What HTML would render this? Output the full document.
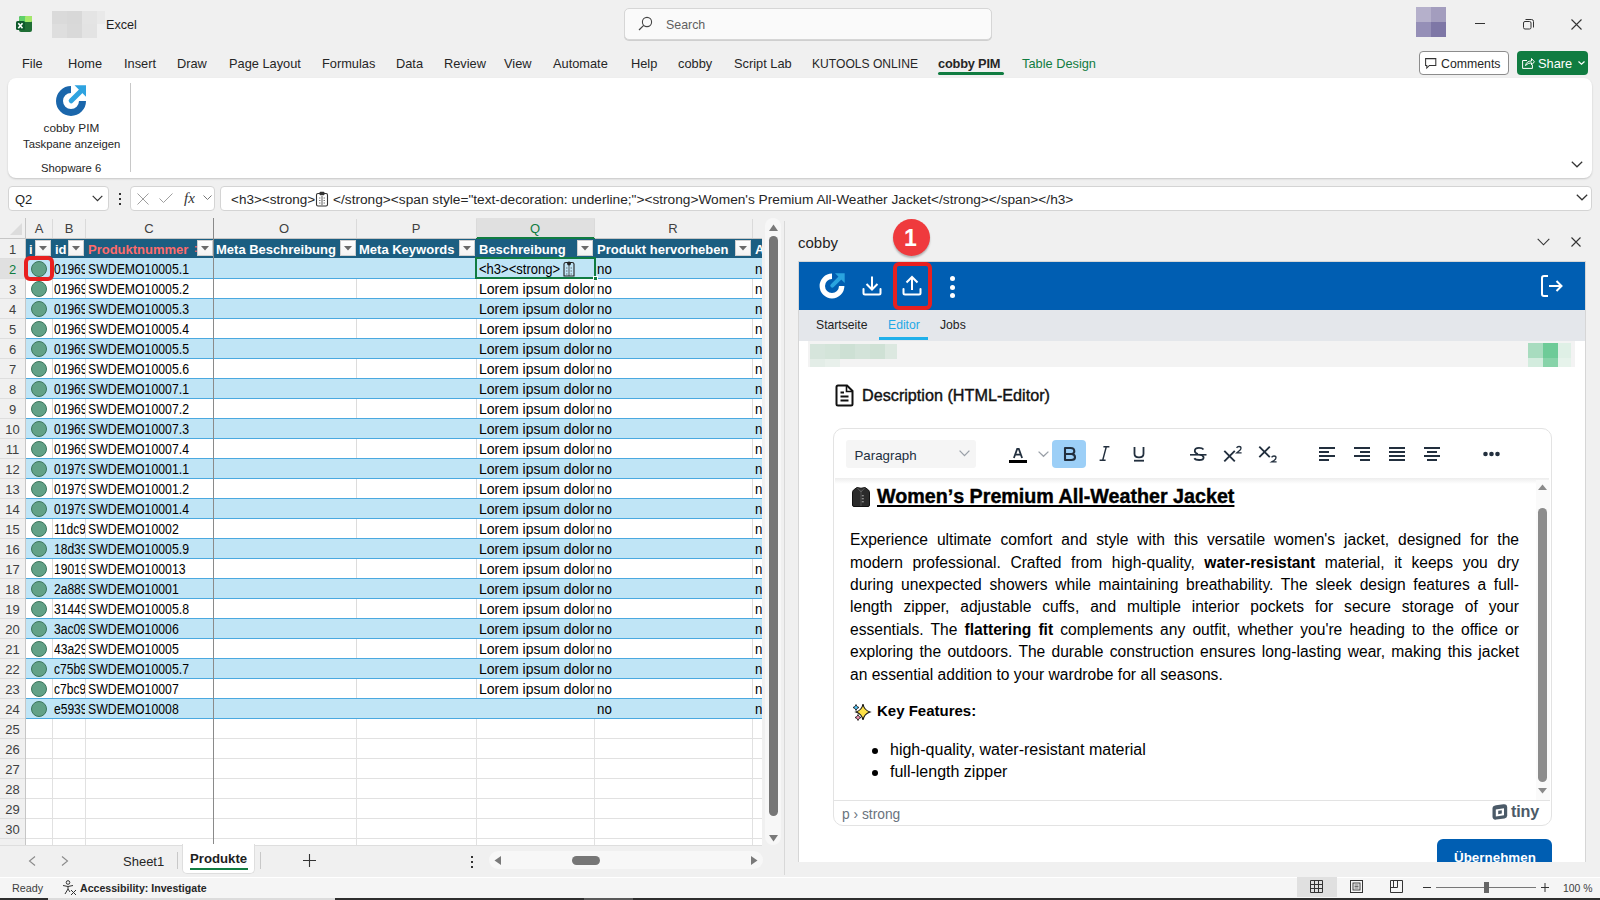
<!DOCTYPE html><html><head><meta charset="utf-8"><title>Excel</title><style>
*{box-sizing:border-box}
html,body{margin:0;padding:0}
body{width:1600px;height:900px;overflow:hidden;position:relative;background:#f0f0f0;font-family:"Liberation Sans",sans-serif}
.a{position:absolute}
.t{position:absolute;white-space:nowrap}
svg{overflow:visible}
</style></head><body>
<svg class="a" style="left:16px;top:16px;" width="16" height="16" viewBox="0 0 16 16">
<rect x="3" y="0" width="13" height="16" rx="2" fill="#1f6e35"/>
<rect x="3" y="0" width="13" height="6" rx="2" fill="#5fd06a"/>
<rect x="9" y="0" width="7" height="6" rx="1" fill="#a4e86a"/>
<rect x="0" y="5" width="9" height="9" rx="1.5" fill="#0e5a2c"/>
<path d="M2.3 7.2 L6.5 12.2 M6.5 7.2 L2.3 12.2" stroke="#fff" stroke-width="1.6"/>
</svg>
<div class="a" style="left:52px;top:11px;width:15px;height:13px;background:#dadada"></div>
<div class="a" style="left:67px;top:11px;width:15px;height:13px;background:#d8d8d8"></div>
<div class="a" style="left:82px;top:11px;width:15px;height:13px;background:#e4e4e4"></div>
<div class="a" style="left:97px;top:11px;width:8px;height:13px;background:#e9e9e9"></div>
<div class="a" style="left:52px;top:24px;width:15px;height:14px;background:#dedede"></div>
<div class="a" style="left:67px;top:24px;width:15px;height:14px;background:#d9d9d9"></div>
<div class="a" style="left:82px;top:24px;width:15px;height:14px;background:#e3e3e3"></div>
<div class="t " style="left:106px;top:19.00px;font-size:12.6px;line-height:12.6px;font-weight:400;color:#1f1f1f;">Excel</div>
<div class="a" style="left:624px;top:8px;width:368px;height:32px;background:#fafafa;border:1px solid #d6d6d6;border-radius:5px;box-shadow:0 1px 0 #cfcfcf"></div>
<svg class="a" style="left:637px;top:16px;" width="16" height="16" viewBox="0 0 16 16"><circle cx="10" cy="6" r="4.6" fill="none" stroke="#444" stroke-width="1.1"/><path d="M6.7 9.3 L2 14" stroke="#444" stroke-width="1.2"/></svg>
<div class="t " style="left:666px;top:19.00px;font-size:12.4px;line-height:12.4px;font-weight:400;color:#5f5f5f;">Search</div>
<div class="a" style="left:1416px;top:7px;width:15px;height:15px;background:#b5b0cb"></div>
<div class="a" style="left:1431px;top:7px;width:15px;height:15px;background:#a39dbe"></div>
<div class="a" style="left:1416px;top:22px;width:15px;height:15px;background:#958fb7"></div>
<div class="a" style="left:1431px;top:22px;width:15px;height:15px;background:#7e77a6"></div>
<div class="a" style="left:1475px;top:23px;width:10px;height:1px;background:#333"></div>
<svg class="a" style="left:1523px;top:19px;" width="11" height="11" viewBox="0 0 11 11"><rect x="0.5" y="2.5" width="7.5" height="7.5" rx="1.5" fill="none" stroke="#333" stroke-width="1"/><path d="M2.5 0.5 H8.5 Q10.5 0.5 10.5 2.5 V8.5" fill="none" stroke="#333" stroke-width="1"/></svg>
<svg class="a" style="left:1571px;top:19px;" width="11" height="11" viewBox="0 0 11 11"><path d="M0.5 0.5 L10.5 10.5 M10.5 0.5 L0.5 10.5" stroke="#333" stroke-width="1.1"/></svg>
<div class="t " style="left:22px;top:58.00px;font-size:12.8px;line-height:12.8px;font-weight:400;color:#262626;">File</div>
<div class="t " style="left:68px;top:58.00px;font-size:12.8px;line-height:12.8px;font-weight:400;color:#262626;">Home</div>
<div class="t " style="left:124px;top:58.00px;font-size:12.8px;line-height:12.8px;font-weight:400;color:#262626;">Insert</div>
<div class="t " style="left:177px;top:58.00px;font-size:12.8px;line-height:12.8px;font-weight:400;color:#262626;">Draw</div>
<div class="t " style="left:229px;top:58.00px;font-size:12.8px;line-height:12.8px;font-weight:400;color:#262626;">Page Layout</div>
<div class="t " style="left:322px;top:58.00px;font-size:12.8px;line-height:12.8px;font-weight:400;color:#262626;">Formulas</div>
<div class="t " style="left:396px;top:58.00px;font-size:12.8px;line-height:12.8px;font-weight:400;color:#262626;">Data</div>
<div class="t " style="left:444px;top:58.00px;font-size:12.8px;line-height:12.8px;font-weight:400;color:#262626;">Review</div>
<div class="t " style="left:504px;top:58.00px;font-size:12.8px;line-height:12.8px;font-weight:400;color:#262626;">View</div>
<div class="t " style="left:553px;top:58.00px;font-size:12.8px;line-height:12.8px;font-weight:400;color:#262626;">Automate</div>
<div class="t " style="left:631px;top:58.00px;font-size:12.8px;line-height:12.8px;font-weight:400;color:#262626;">Help</div>
<div class="t " style="left:678px;top:58.00px;font-size:12.8px;line-height:12.8px;font-weight:400;color:#262626;">cobby</div>
<div class="t " style="left:734px;top:58.00px;font-size:12.8px;line-height:12.8px;font-weight:400;color:#262626;">Script Lab</div>
<div class="t " style="left:812px;top:58.00px;font-size:12.1px;line-height:12.1px;font-weight:400;color:#262626;">KUTOOLS ONLINE</div>
<div class="t " style="left:938px;top:58.00px;font-size:12.8px;line-height:12.8px;font-weight:700;color:#262626;letter-spacing:-0.2px">cobby PIM</div>
<div class="a" style="left:938px;top:72px;width:66px;height:3px;background:#107c41;border-radius:2px"></div>
<div class="t " style="left:1022px;top:58.00px;font-size:12.8px;line-height:12.8px;font-weight:400;color:#107c41;">Table Design</div>
<div class="a" style="left:1419px;top:51px;width:90px;height:24px;background:#fff;border:1px solid #8c8c8c;border-radius:4px"></div>
<svg class="a" style="left:1425px;top:58px;" width="12" height="11" viewBox="0 0 12 11"><path d="M0.6 0.6 H10.8 V7.4 H4.4 L1.8 10 V7.4 H0.6 Z" fill="none" stroke="#333" stroke-width="1.05"/></svg>
<div class="t " style="left:1441px;top:58.00px;font-size:12.3px;line-height:12.3px;font-weight:400;color:#262626;">Comments</div>
<div class="a" style="left:1517px;top:51px;width:71px;height:24px;background:#107c41;border-radius:4px"></div>
<svg class="a" style="left:1522px;top:57px;" width="13" height="12" viewBox="0 0 13 12"><path d="M5 3.5 H0.6 V11.4 H10.4 V8" fill="none" stroke="#fff" stroke-width="1"/><path d="M3.5 8.5 Q4.5 4 9.5 4 V1.5 L12.4 4.8 L9.5 8 V5.8 Q6 5.8 3.5 8.5 Z" fill="none" stroke="#fff" stroke-width="1"/></svg>
<div class="t " style="left:1538px;top:58.00px;font-size:12.8px;line-height:12.8px;font-weight:400;color:#fff;">Share</div>
<svg class="a" style="left:1578px;top:61px;" width="7" height="4" viewBox="0 0 7 4"><path d="M0.5 0.5 L3.5 3.3 L6.5 0.5" fill="none" stroke="#fff" stroke-width="1.2"/></svg>
<div class="a" style="left:8px;top:78px;width:1584px;height:100px;background:#fff;border-radius:8px;box-shadow:0 1px 2px rgba(0,0,0,0.18)"></div>
<svg class="a" style="left:56px;top:85px;" width="30" height="31" viewBox="0 0 30 31">
<path d="M15 4.5 A11.5 11.5 0 1 0 26.5 16" fill="none" stroke="#1a66ab" stroke-width="7"/>
<path d="M15.2 15.8 L25 6" stroke="#2ea3e0" stroke-width="5" stroke-linecap="round"/>
<path d="M18.5 0.3 H30 V11.8 Z" fill="#2ea3e0"/>
</svg>
<div class="t " style="left:43.5px;top:123.00px;font-size:11.8px;line-height:11.8px;font-weight:400;color:#262626;">cobby PIM</div>
<div class="t " style="left:23px;top:139.00px;font-size:11.3px;line-height:11.3px;font-weight:400;color:#262626;">Taskpane anzeigen</div>
<div class="t " style="left:41px;top:163.00px;font-size:11.3px;line-height:11.3px;font-weight:400;color:#262626;">Shopware 6</div>
<div class="a" style="left:130px;top:83px;width:1px;height:89px;background:#c8c8c8"></div>
<svg class="a" style="left:1571px;top:161px;" width="12" height="7" viewBox="0 0 12 7"><path d="M0.8 0.8 L6 5.8 L11.2 0.8" fill="none" stroke="#333" stroke-width="1.2"/></svg>
<div class="a" style="left:8px;top:186px;width:101px;height:25px;background:#fff;border:1px solid #d4d4d4;border-radius:4px"></div>
<div class="t " style="left:15px;top:193.00px;font-size:13px;line-height:13px;font-weight:400;color:#1f1f1f;">Q2</div>
<svg class="a" style="left:92px;top:195px;" width="11" height="7" viewBox="0 0 11 7"><path d="M0.7 0.8 L5.5 5.6 L10.3 0.8" fill="none" stroke="#333" stroke-width="1.2"/></svg>
<div class="a" style="left:119px;top:193px;width:2px;height:2px;background:#333"></div>
<div class="a" style="left:119px;top:198px;width:2px;height:2px;background:#333"></div>
<div class="a" style="left:119px;top:203px;width:2px;height:2px;background:#333"></div>
<div class="a" style="left:130px;top:186px;width:85px;height:25px;background:#fff;border:1px solid #d4d4d4;border-radius:4px"></div>
<svg class="a" style="left:137px;top:193px;" width="12" height="12" viewBox="0 0 12 12"><path d="M0.5 0.5 L11.5 11.5 M11.5 0.5 L0.5 11.5" stroke="#9e9e9e" stroke-width="1"/></svg>
<svg class="a" style="left:159px;top:193px;" width="14" height="10" viewBox="0 0 14 10"><path d="M0.5 5.5 L4.5 9.5 L13.5 0.5" fill="none" stroke="#9e9e9e" stroke-width="1"/></svg>
<div class="t " style="left:184px;top:191.00px;font-size:15px;line-height:15px;font-weight:400;color:#333;font-family:'Liberation Serif',serif;font-style:italic">fx</div>
<svg class="a" style="left:203px;top:195px;" width="9" height="6" viewBox="0 0 9 6"><path d="M0.5 0.5 L4.5 4.5 L8.5 0.5" fill="none" stroke="#777" stroke-width="1"/></svg>
<div class="a" style="left:220px;top:186px;width:1372px;height:25px;background:#fff;border:1px solid #d4d4d4;border-radius:4px"></div>
<div class="t " style="left:231px;top:193.00px;font-size:13.5px;line-height:13.5px;font-weight:400;color:#262626;">&lt;h3&gt;&lt;strong&gt;</div>
<svg class="a" style="left:315px;top:191px;" width="14" height="16" viewBox="0 0 14 16"><rect x="1.5" y="2.5" width="11" height="12.5" rx="1.5" fill="none" stroke="#333" stroke-width="1.1"/><rect x="4.5" y="0.8" width="5" height="3.5" rx="1" fill="#333"/><path d="M7 5 V14" stroke="#333" stroke-width="0.8"/><path d="M4 7 H5.5 M4 9.5 H5.5 M4 12 H5.5 M8.5 7 H10 M8.5 9.5 H10 M8.5 12 H10" stroke="#555" stroke-width="0.8"/></svg>
<div class="t " style="left:333px;top:193.00px;font-size:13.7px;line-height:13.7px;font-weight:400;color:#262626;">&lt;/strong&gt;&lt;span style=&quot;text-decoration: underline;&quot;&gt;&lt;strong&gt;Women&#x27;s Premium All-Weather Jacket&lt;/strong&gt;&lt;/span&gt;&lt;/h3&gt;</div>
<svg class="a" style="left:1576px;top:194px;" width="12" height="7" viewBox="0 0 12 7"><path d="M0.8 0.8 L6 5.8 L11.2 0.8" fill="none" stroke="#333" stroke-width="1.2"/></svg>
<div class="a" style="left:0;top:218px;width:762px;height:627px;overflow:hidden;background:#fff">
<div class="a" style="left:0px;top:0px;width:762px;height:20px;background:#f0f0f0"></div>
<div class="a" style="left:0px;top:20px;width:762px;height:1px;background:#c6c6c6"></div>
<div class="a" style="left:476px;top:0px;width:119px;height:20px;background:#e0e0e0"></div>
<div class="a" style="left:476px;top:19px;width:119px;height:2px;background:#107c41"></div>
<div class="a" style="left:52px;top:1px;width:1px;height:19px;background:#dadada"></div>
<div class="a" style="left:85px;top:1px;width:1px;height:19px;background:#dadada"></div>
<div class="a" style="left:356px;top:1px;width:1px;height:19px;background:#dadada"></div>
<div class="a" style="left:476px;top:1px;width:1px;height:19px;background:#dadada"></div>
<div class="a" style="left:594px;top:1px;width:1px;height:19px;background:#dadada"></div>
<div class="a" style="left:752px;top:1px;width:1px;height:19px;background:#dadada"></div>
<div class="a" style="left:25px;top:0px;width:1px;height:627px;background:#c6c6c6"></div>
<svg class="a" style="left:10px;top:5px" width="12" height="12" viewBox="0 0 12 12"><path d="M12 0 V12 H0 Z" fill="#dcdcdc"/></svg>
<div class="t" style="left:19px;top:4px;width:40px;text-align:center;font-size:13px;line-height:13px;color:#404040">A</div>
<div class="t" style="left:49px;top:4px;width:40px;text-align:center;font-size:13px;line-height:13px;color:#404040">B</div>
<div class="t" style="left:129px;top:4px;width:40px;text-align:center;font-size:13px;line-height:13px;color:#404040">C</div>
<div class="t" style="left:264px;top:4px;width:40px;text-align:center;font-size:13px;line-height:13px;color:#404040">O</div>
<div class="t" style="left:396px;top:4px;width:40px;text-align:center;font-size:13px;line-height:13px;color:#404040">P</div>
<div class="t" style="left:515px;top:4px;width:40px;text-align:center;font-size:13px;line-height:13px;color:#107c41">Q</div>
<div class="t" style="left:653px;top:4px;width:40px;text-align:center;font-size:13px;line-height:13px;color:#404040">R</div>
<div class="a" style="left:0px;top:21px;width:25px;height:606px;background:#f0f0f0"></div>
<div class="a" style="left:0px;top:41px;width:25px;height:19px;background:#e0e0e0"></div>
<div class="t" style="left:0px;top:24.50px;width:25px;text-align:center;font-size:13px;line-height:13px;color:#404040">1</div>
<div class="a" style="left:0px;top:40px;width:25px;height:1px;background:#dedede"></div>
<div class="t" style="left:0px;top:44.50px;width:25px;text-align:center;font-size:13px;line-height:13px;color:#107c41">2</div>
<div class="a" style="left:0px;top:60px;width:25px;height:1px;background:#dedede"></div>
<div class="t" style="left:0px;top:64.50px;width:25px;text-align:center;font-size:13px;line-height:13px;color:#404040">3</div>
<div class="a" style="left:0px;top:80px;width:25px;height:1px;background:#dedede"></div>
<div class="t" style="left:0px;top:84.50px;width:25px;text-align:center;font-size:13px;line-height:13px;color:#404040">4</div>
<div class="a" style="left:0px;top:100px;width:25px;height:1px;background:#dedede"></div>
<div class="t" style="left:0px;top:104.50px;width:25px;text-align:center;font-size:13px;line-height:13px;color:#404040">5</div>
<div class="a" style="left:0px;top:120px;width:25px;height:1px;background:#dedede"></div>
<div class="t" style="left:0px;top:124.50px;width:25px;text-align:center;font-size:13px;line-height:13px;color:#404040">6</div>
<div class="a" style="left:0px;top:140px;width:25px;height:1px;background:#dedede"></div>
<div class="t" style="left:0px;top:144.50px;width:25px;text-align:center;font-size:13px;line-height:13px;color:#404040">7</div>
<div class="a" style="left:0px;top:160px;width:25px;height:1px;background:#dedede"></div>
<div class="t" style="left:0px;top:164.50px;width:25px;text-align:center;font-size:13px;line-height:13px;color:#404040">8</div>
<div class="a" style="left:0px;top:180px;width:25px;height:1px;background:#dedede"></div>
<div class="t" style="left:0px;top:184.50px;width:25px;text-align:center;font-size:13px;line-height:13px;color:#404040">9</div>
<div class="a" style="left:0px;top:200px;width:25px;height:1px;background:#dedede"></div>
<div class="t" style="left:0px;top:204.50px;width:25px;text-align:center;font-size:13px;line-height:13px;color:#404040">10</div>
<div class="a" style="left:0px;top:220px;width:25px;height:1px;background:#dedede"></div>
<div class="t" style="left:0px;top:224.50px;width:25px;text-align:center;font-size:13px;line-height:13px;color:#404040">11</div>
<div class="a" style="left:0px;top:240px;width:25px;height:1px;background:#dedede"></div>
<div class="t" style="left:0px;top:244.50px;width:25px;text-align:center;font-size:13px;line-height:13px;color:#404040">12</div>
<div class="a" style="left:0px;top:260px;width:25px;height:1px;background:#dedede"></div>
<div class="t" style="left:0px;top:264.50px;width:25px;text-align:center;font-size:13px;line-height:13px;color:#404040">13</div>
<div class="a" style="left:0px;top:280px;width:25px;height:1px;background:#dedede"></div>
<div class="t" style="left:0px;top:284.50px;width:25px;text-align:center;font-size:13px;line-height:13px;color:#404040">14</div>
<div class="a" style="left:0px;top:300px;width:25px;height:1px;background:#dedede"></div>
<div class="t" style="left:0px;top:304.50px;width:25px;text-align:center;font-size:13px;line-height:13px;color:#404040">15</div>
<div class="a" style="left:0px;top:320px;width:25px;height:1px;background:#dedede"></div>
<div class="t" style="left:0px;top:324.50px;width:25px;text-align:center;font-size:13px;line-height:13px;color:#404040">16</div>
<div class="a" style="left:0px;top:340px;width:25px;height:1px;background:#dedede"></div>
<div class="t" style="left:0px;top:344.50px;width:25px;text-align:center;font-size:13px;line-height:13px;color:#404040">17</div>
<div class="a" style="left:0px;top:360px;width:25px;height:1px;background:#dedede"></div>
<div class="t" style="left:0px;top:364.50px;width:25px;text-align:center;font-size:13px;line-height:13px;color:#404040">18</div>
<div class="a" style="left:0px;top:380px;width:25px;height:1px;background:#dedede"></div>
<div class="t" style="left:0px;top:384.50px;width:25px;text-align:center;font-size:13px;line-height:13px;color:#404040">19</div>
<div class="a" style="left:0px;top:400px;width:25px;height:1px;background:#dedede"></div>
<div class="t" style="left:0px;top:404.50px;width:25px;text-align:center;font-size:13px;line-height:13px;color:#404040">20</div>
<div class="a" style="left:0px;top:420px;width:25px;height:1px;background:#dedede"></div>
<div class="t" style="left:0px;top:424.50px;width:25px;text-align:center;font-size:13px;line-height:13px;color:#404040">21</div>
<div class="a" style="left:0px;top:440px;width:25px;height:1px;background:#dedede"></div>
<div class="t" style="left:0px;top:444.50px;width:25px;text-align:center;font-size:13px;line-height:13px;color:#404040">22</div>
<div class="a" style="left:0px;top:460px;width:25px;height:1px;background:#dedede"></div>
<div class="t" style="left:0px;top:464.50px;width:25px;text-align:center;font-size:13px;line-height:13px;color:#404040">23</div>
<div class="a" style="left:0px;top:480px;width:25px;height:1px;background:#dedede"></div>
<div class="t" style="left:0px;top:484.50px;width:25px;text-align:center;font-size:13px;line-height:13px;color:#404040">24</div>
<div class="a" style="left:0px;top:500px;width:25px;height:1px;background:#dedede"></div>
<div class="t" style="left:0px;top:504.50px;width:25px;text-align:center;font-size:13px;line-height:13px;color:#404040">25</div>
<div class="a" style="left:0px;top:520px;width:25px;height:1px;background:#dedede"></div>
<div class="t" style="left:0px;top:524.50px;width:25px;text-align:center;font-size:13px;line-height:13px;color:#404040">26</div>
<div class="a" style="left:0px;top:540px;width:25px;height:1px;background:#dedede"></div>
<div class="t" style="left:0px;top:544.50px;width:25px;text-align:center;font-size:13px;line-height:13px;color:#404040">27</div>
<div class="a" style="left:0px;top:560px;width:25px;height:1px;background:#dedede"></div>
<div class="t" style="left:0px;top:564.50px;width:25px;text-align:center;font-size:13px;line-height:13px;color:#404040">28</div>
<div class="a" style="left:0px;top:580px;width:25px;height:1px;background:#dedede"></div>
<div class="t" style="left:0px;top:584.50px;width:25px;text-align:center;font-size:13px;line-height:13px;color:#404040">29</div>
<div class="a" style="left:0px;top:600px;width:25px;height:1px;background:#dedede"></div>
<div class="t" style="left:0px;top:604.50px;width:25px;text-align:center;font-size:13px;line-height:13px;color:#404040">30</div>
<div class="a" style="left:0px;top:620px;width:25px;height:1px;background:#dedede"></div>
<div class="t" style="left:0px;top:624.50px;width:25px;text-align:center;font-size:13px;line-height:13px;color:#404040">31</div>
<div class="a" style="left:26px;top:500px;width:736px;height:1px;background:#e1e1e1"></div>
<div class="a" style="left:26px;top:520px;width:736px;height:1px;background:#e1e1e1"></div>
<div class="a" style="left:26px;top:540px;width:736px;height:1px;background:#e1e1e1"></div>
<div class="a" style="left:26px;top:560px;width:736px;height:1px;background:#e1e1e1"></div>
<div class="a" style="left:26px;top:580px;width:736px;height:1px;background:#e1e1e1"></div>
<div class="a" style="left:26px;top:600px;width:736px;height:1px;background:#e1e1e1"></div>
<div class="a" style="left:26px;top:620px;width:736px;height:1px;background:#e1e1e1"></div>
<div class="a" style="left:26px;top:640px;width:736px;height:1px;background:#e1e1e1"></div>
<div class="a" style="left:52px;top:501px;width:1px;height:126px;background:#e1e1e1"></div>
<div class="a" style="left:85px;top:501px;width:1px;height:126px;background:#e1e1e1"></div>
<div class="a" style="left:356px;top:501px;width:1px;height:126px;background:#e1e1e1"></div>
<div class="a" style="left:476px;top:501px;width:1px;height:126px;background:#e1e1e1"></div>
<div class="a" style="left:594px;top:501px;width:1px;height:126px;background:#e1e1e1"></div>
<div class="a" style="left:752px;top:501px;width:1px;height:126px;background:#e1e1e1"></div>
<div class="a" style="left:26px;top:21px;width:736px;height:19px;background:#1b5e81"></div>
<div class="a" style="left:26px;top:40px;width:736px;height:1px;background:#c0e5f6"></div>
<div class="t" style="left:29px;top:25.00px;font-size:13px;line-height:13px;font-weight:700;color:#fff;">i</div>
<div class="a" style="left:35px;top:22px;width:16px;height:16px;background:linear-gradient(#fff,#f3f3f3);border:1px solid #d0d0d0"></div>
<svg class="a" style="left:39px;top:28px" width="8" height="5" viewBox="0 0 8 5"><path d="M0 0 H8 L4 4.5 Z" fill="#6a6a6a"/></svg>
<div class="t" style="left:55px;top:25.00px;font-size:13px;line-height:13px;font-weight:700;color:#fff;">id</div>
<div class="a" style="left:68px;top:22px;width:16px;height:16px;background:linear-gradient(#fff,#f3f3f3);border:1px solid #d0d0d0"></div>
<svg class="a" style="left:72px;top:28px" width="8" height="5" viewBox="0 0 8 5"><path d="M0 0 H8 L4 4.5 Z" fill="#6a6a6a"/></svg>
<div class="t" style="left:88px;top:25.00px;font-size:13px;line-height:13px;font-weight:700;color:#ff6b6b;">Produktnummer</div>
<div class="a" style="left:197px;top:22px;width:16px;height:16px;background:linear-gradient(#fff,#f3f3f3);border:1px solid #d0d0d0"></div>
<svg class="a" style="left:201px;top:28px" width="8" height="5" viewBox="0 0 8 5"><path d="M0 0 H8 L4 4.5 Z" fill="#6a6a6a"/></svg>
<div class="t" style="left:216px;top:25.00px;font-size:13px;line-height:13px;font-weight:700;color:#fff;">Meta Beschreibung</div>
<div class="a" style="left:340px;top:22px;width:16px;height:16px;background:linear-gradient(#fff,#f3f3f3);border:1px solid #d0d0d0"></div>
<svg class="a" style="left:344px;top:28px" width="8" height="5" viewBox="0 0 8 5"><path d="M0 0 H8 L4 4.5 Z" fill="#6a6a6a"/></svg>
<div class="t" style="left:359px;top:25.00px;font-size:13px;line-height:13px;font-weight:700;color:#fff;">Meta Keywords</div>
<div class="a" style="left:459px;top:22px;width:16px;height:16px;background:linear-gradient(#fff,#f3f3f3);border:1px solid #d0d0d0"></div>
<svg class="a" style="left:463px;top:28px" width="8" height="5" viewBox="0 0 8 5"><path d="M0 0 H8 L4 4.5 Z" fill="#6a6a6a"/></svg>
<div class="t" style="left:479px;top:25.00px;font-size:13px;line-height:13px;font-weight:700;color:#fff;">Beschreibung</div>
<div class="a" style="left:577px;top:22px;width:16px;height:16px;background:linear-gradient(#fff,#f3f3f3);border:1px solid #d0d0d0"></div>
<svg class="a" style="left:581px;top:28px" width="8" height="5" viewBox="0 0 8 5"><path d="M0 0 H8 L4 4.5 Z" fill="#6a6a6a"/></svg>
<div class="t" style="left:597px;top:25.00px;font-size:13px;line-height:13px;font-weight:700;color:#fff;">Produkt hervorheben</div>
<div class="a" style="left:735px;top:22px;width:16px;height:16px;background:linear-gradient(#fff,#f3f3f3);border:1px solid #d0d0d0"></div>
<svg class="a" style="left:739px;top:28px" width="8" height="5" viewBox="0 0 8 5"><path d="M0 0 H8 L4 4.5 Z" fill="#6a6a6a"/></svg>
<div class="t" style="left:755px;top:25.00px;font-size:13px;line-height:13px;font-weight:700;color:#fff;">A</div>
<div class="t" style="left:194px;top:25.53px;font-size:10px;line-height:10px;font-weight:700;color:#ff6b6b;">:</div>
<div class="a" style="left:26px;top:41px;width:736px;height:19px;background:#c0e5f6"></div>
<div class="a" style="left:26px;top:60px;width:736px;height:1px;background:#4aa9e0"></div>
<svg class="a" style="left:30px;top:42px" width="18" height="18" viewBox="0 0 18 18"><circle cx="9" cy="9" r="7.5" fill="#62a187" stroke="#3b765c" stroke-width="1"/></svg>
<div class="a" style="left:54px;top:41px;width:31px;height:19px;overflow:hidden"><div class="t" style="left:0;top:2.65px;font-size:14px;line-height:14px;color:#000;transform:scaleX(0.86);transform-origin:0 0">01969</div></div>
<div class="t" style="left:88px;top:43.65px;font-size:14px;line-height:14px;color:#000;transform:scaleX(0.877);transform-origin:0 0">SWDEMO10005.1</div>
<div class="t" style="left:479px;top:43.65px;font-size:14px;line-height:14px;font-weight:400;color:#000;transform:scaleX(0.93);transform-origin:0 0">&lt;h3&gt;&lt;strong&gt;</div>
<svg class="a" style="left:562px;top:43px" width="14" height="16" viewBox="0 0 14 16"><path d="M2 3 Q2 1.5 4 1.5 H10 Q12 1.5 12 3 V15 H2 Z" fill="none" stroke="#222" stroke-width="1.1"/><circle cx="7" cy="2.5" r="2" fill="#222"/><path d="M7 4 V15" stroke="#333" stroke-width="0.8"/><path d="M4 7 H5.5 M4 10 H5.5 M4 13 H5.5 M8.5 7 H10 M8.5 10 H10 M8.5 13 H10" stroke="#555" stroke-width="0.8"/></svg>
<div class="t" style="left:597px;top:43.65px;font-size:14px;line-height:14px;font-weight:400;color:#000;transform:scaleX(0.95);transform-origin:0 0">no</div>
<div class="t" style="left:755px;top:43.65px;font-size:14px;line-height:14px;font-weight:400;color:#000;transform:scaleX(0.95);transform-origin:0 0">no</div>
<div class="a" style="left:26px;top:61px;width:736px;height:19px;background:#ffffff"></div>
<div class="a" style="left:26px;top:80px;width:736px;height:1px;background:#4aa9e0"></div>
<div class="a" style="left:52px;top:61px;width:1px;height:19px;background:#dcdcdc"></div>
<div class="a" style="left:85px;top:61px;width:1px;height:19px;background:#dcdcdc"></div>
<div class="a" style="left:356px;top:61px;width:1px;height:19px;background:#dcdcdc"></div>
<div class="a" style="left:476px;top:61px;width:1px;height:19px;background:#dcdcdc"></div>
<div class="a" style="left:594px;top:61px;width:1px;height:19px;background:#dcdcdc"></div>
<div class="a" style="left:752px;top:61px;width:1px;height:19px;background:#dcdcdc"></div>
<svg class="a" style="left:30px;top:62px" width="18" height="18" viewBox="0 0 18 18"><circle cx="9" cy="9" r="7.5" fill="#62a187" stroke="#3b765c" stroke-width="1"/></svg>
<div class="a" style="left:54px;top:61px;width:31px;height:19px;overflow:hidden"><div class="t" style="left:0;top:2.65px;font-size:14px;line-height:14px;color:#000;transform:scaleX(0.86);transform-origin:0 0">01969</div></div>
<div class="t" style="left:88px;top:63.65px;font-size:14px;line-height:14px;color:#000;transform:scaleX(0.877);transform-origin:0 0">SWDEMO10005.2</div>
<div class="a" style="left:478px;top:61px;width:116px;height:19px;overflow:hidden"><div class="t" style="left:1px;top:2.65px;font-size:14px;line-height:14px;color:#000;">Lorem ipsum dolor sit</div></div>
<div class="t" style="left:597px;top:63.65px;font-size:14px;line-height:14px;font-weight:400;color:#000;transform:scaleX(0.95);transform-origin:0 0">no</div>
<div class="t" style="left:755px;top:63.65px;font-size:14px;line-height:14px;font-weight:400;color:#000;transform:scaleX(0.95);transform-origin:0 0">no</div>
<div class="a" style="left:26px;top:81px;width:736px;height:19px;background:#c0e5f6"></div>
<div class="a" style="left:26px;top:100px;width:736px;height:1px;background:#4aa9e0"></div>
<svg class="a" style="left:30px;top:82px" width="18" height="18" viewBox="0 0 18 18"><circle cx="9" cy="9" r="7.5" fill="#62a187" stroke="#3b765c" stroke-width="1"/></svg>
<div class="a" style="left:54px;top:81px;width:31px;height:19px;overflow:hidden"><div class="t" style="left:0;top:2.65px;font-size:14px;line-height:14px;color:#000;transform:scaleX(0.86);transform-origin:0 0">01969</div></div>
<div class="t" style="left:88px;top:83.65px;font-size:14px;line-height:14px;color:#000;transform:scaleX(0.877);transform-origin:0 0">SWDEMO10005.3</div>
<div class="a" style="left:478px;top:81px;width:116px;height:19px;overflow:hidden"><div class="t" style="left:1px;top:2.65px;font-size:14px;line-height:14px;color:#000;">Lorem ipsum dolor sit</div></div>
<div class="t" style="left:597px;top:83.65px;font-size:14px;line-height:14px;font-weight:400;color:#000;transform:scaleX(0.95);transform-origin:0 0">no</div>
<div class="t" style="left:755px;top:83.65px;font-size:14px;line-height:14px;font-weight:400;color:#000;transform:scaleX(0.95);transform-origin:0 0">no</div>
<div class="a" style="left:26px;top:101px;width:736px;height:19px;background:#ffffff"></div>
<div class="a" style="left:26px;top:120px;width:736px;height:1px;background:#4aa9e0"></div>
<div class="a" style="left:52px;top:101px;width:1px;height:19px;background:#dcdcdc"></div>
<div class="a" style="left:85px;top:101px;width:1px;height:19px;background:#dcdcdc"></div>
<div class="a" style="left:356px;top:101px;width:1px;height:19px;background:#dcdcdc"></div>
<div class="a" style="left:476px;top:101px;width:1px;height:19px;background:#dcdcdc"></div>
<div class="a" style="left:594px;top:101px;width:1px;height:19px;background:#dcdcdc"></div>
<div class="a" style="left:752px;top:101px;width:1px;height:19px;background:#dcdcdc"></div>
<svg class="a" style="left:30px;top:102px" width="18" height="18" viewBox="0 0 18 18"><circle cx="9" cy="9" r="7.5" fill="#62a187" stroke="#3b765c" stroke-width="1"/></svg>
<div class="a" style="left:54px;top:101px;width:31px;height:19px;overflow:hidden"><div class="t" style="left:0;top:2.65px;font-size:14px;line-height:14px;color:#000;transform:scaleX(0.86);transform-origin:0 0">01969</div></div>
<div class="t" style="left:88px;top:103.65px;font-size:14px;line-height:14px;color:#000;transform:scaleX(0.877);transform-origin:0 0">SWDEMO10005.4</div>
<div class="a" style="left:478px;top:101px;width:116px;height:19px;overflow:hidden"><div class="t" style="left:1px;top:2.65px;font-size:14px;line-height:14px;color:#000;">Lorem ipsum dolor sit</div></div>
<div class="t" style="left:597px;top:103.65px;font-size:14px;line-height:14px;font-weight:400;color:#000;transform:scaleX(0.95);transform-origin:0 0">no</div>
<div class="t" style="left:755px;top:103.65px;font-size:14px;line-height:14px;font-weight:400;color:#000;transform:scaleX(0.95);transform-origin:0 0">no</div>
<div class="a" style="left:26px;top:121px;width:736px;height:19px;background:#c0e5f6"></div>
<div class="a" style="left:26px;top:140px;width:736px;height:1px;background:#4aa9e0"></div>
<svg class="a" style="left:30px;top:122px" width="18" height="18" viewBox="0 0 18 18"><circle cx="9" cy="9" r="7.5" fill="#62a187" stroke="#3b765c" stroke-width="1"/></svg>
<div class="a" style="left:54px;top:121px;width:31px;height:19px;overflow:hidden"><div class="t" style="left:0;top:2.65px;font-size:14px;line-height:14px;color:#000;transform:scaleX(0.86);transform-origin:0 0">01969</div></div>
<div class="t" style="left:88px;top:123.65px;font-size:14px;line-height:14px;color:#000;transform:scaleX(0.877);transform-origin:0 0">SWDEMO10005.5</div>
<div class="a" style="left:478px;top:121px;width:116px;height:19px;overflow:hidden"><div class="t" style="left:1px;top:2.65px;font-size:14px;line-height:14px;color:#000;">Lorem ipsum dolor sit</div></div>
<div class="t" style="left:597px;top:123.65px;font-size:14px;line-height:14px;font-weight:400;color:#000;transform:scaleX(0.95);transform-origin:0 0">no</div>
<div class="t" style="left:755px;top:123.65px;font-size:14px;line-height:14px;font-weight:400;color:#000;transform:scaleX(0.95);transform-origin:0 0">no</div>
<div class="a" style="left:26px;top:141px;width:736px;height:19px;background:#ffffff"></div>
<div class="a" style="left:26px;top:160px;width:736px;height:1px;background:#4aa9e0"></div>
<div class="a" style="left:52px;top:141px;width:1px;height:19px;background:#dcdcdc"></div>
<div class="a" style="left:85px;top:141px;width:1px;height:19px;background:#dcdcdc"></div>
<div class="a" style="left:356px;top:141px;width:1px;height:19px;background:#dcdcdc"></div>
<div class="a" style="left:476px;top:141px;width:1px;height:19px;background:#dcdcdc"></div>
<div class="a" style="left:594px;top:141px;width:1px;height:19px;background:#dcdcdc"></div>
<div class="a" style="left:752px;top:141px;width:1px;height:19px;background:#dcdcdc"></div>
<svg class="a" style="left:30px;top:142px" width="18" height="18" viewBox="0 0 18 18"><circle cx="9" cy="9" r="7.5" fill="#62a187" stroke="#3b765c" stroke-width="1"/></svg>
<div class="a" style="left:54px;top:141px;width:31px;height:19px;overflow:hidden"><div class="t" style="left:0;top:2.65px;font-size:14px;line-height:14px;color:#000;transform:scaleX(0.86);transform-origin:0 0">01969</div></div>
<div class="t" style="left:88px;top:143.65px;font-size:14px;line-height:14px;color:#000;transform:scaleX(0.877);transform-origin:0 0">SWDEMO10005.6</div>
<div class="a" style="left:478px;top:141px;width:116px;height:19px;overflow:hidden"><div class="t" style="left:1px;top:2.65px;font-size:14px;line-height:14px;color:#000;">Lorem ipsum dolor sit</div></div>
<div class="t" style="left:597px;top:143.65px;font-size:14px;line-height:14px;font-weight:400;color:#000;transform:scaleX(0.95);transform-origin:0 0">no</div>
<div class="t" style="left:755px;top:143.65px;font-size:14px;line-height:14px;font-weight:400;color:#000;transform:scaleX(0.95);transform-origin:0 0">no</div>
<div class="a" style="left:26px;top:161px;width:736px;height:19px;background:#c0e5f6"></div>
<div class="a" style="left:26px;top:180px;width:736px;height:1px;background:#4aa9e0"></div>
<svg class="a" style="left:30px;top:162px" width="18" height="18" viewBox="0 0 18 18"><circle cx="9" cy="9" r="7.5" fill="#62a187" stroke="#3b765c" stroke-width="1"/></svg>
<div class="a" style="left:54px;top:161px;width:31px;height:19px;overflow:hidden"><div class="t" style="left:0;top:2.65px;font-size:14px;line-height:14px;color:#000;transform:scaleX(0.86);transform-origin:0 0">01969</div></div>
<div class="t" style="left:88px;top:163.65px;font-size:14px;line-height:14px;color:#000;transform:scaleX(0.877);transform-origin:0 0">SWDEMO10007.1</div>
<div class="a" style="left:478px;top:161px;width:116px;height:19px;overflow:hidden"><div class="t" style="left:1px;top:2.65px;font-size:14px;line-height:14px;color:#000;">Lorem ipsum dolor sit</div></div>
<div class="t" style="left:597px;top:163.65px;font-size:14px;line-height:14px;font-weight:400;color:#000;transform:scaleX(0.95);transform-origin:0 0">no</div>
<div class="t" style="left:755px;top:163.65px;font-size:14px;line-height:14px;font-weight:400;color:#000;transform:scaleX(0.95);transform-origin:0 0">no</div>
<div class="a" style="left:26px;top:181px;width:736px;height:19px;background:#ffffff"></div>
<div class="a" style="left:26px;top:200px;width:736px;height:1px;background:#4aa9e0"></div>
<div class="a" style="left:52px;top:181px;width:1px;height:19px;background:#dcdcdc"></div>
<div class="a" style="left:85px;top:181px;width:1px;height:19px;background:#dcdcdc"></div>
<div class="a" style="left:356px;top:181px;width:1px;height:19px;background:#dcdcdc"></div>
<div class="a" style="left:476px;top:181px;width:1px;height:19px;background:#dcdcdc"></div>
<div class="a" style="left:594px;top:181px;width:1px;height:19px;background:#dcdcdc"></div>
<div class="a" style="left:752px;top:181px;width:1px;height:19px;background:#dcdcdc"></div>
<svg class="a" style="left:30px;top:182px" width="18" height="18" viewBox="0 0 18 18"><circle cx="9" cy="9" r="7.5" fill="#62a187" stroke="#3b765c" stroke-width="1"/></svg>
<div class="a" style="left:54px;top:181px;width:31px;height:19px;overflow:hidden"><div class="t" style="left:0;top:2.65px;font-size:14px;line-height:14px;color:#000;transform:scaleX(0.86);transform-origin:0 0">01969</div></div>
<div class="t" style="left:88px;top:183.65px;font-size:14px;line-height:14px;color:#000;transform:scaleX(0.877);transform-origin:0 0">SWDEMO10007.2</div>
<div class="a" style="left:478px;top:181px;width:116px;height:19px;overflow:hidden"><div class="t" style="left:1px;top:2.65px;font-size:14px;line-height:14px;color:#000;">Lorem ipsum dolor sit</div></div>
<div class="t" style="left:597px;top:183.65px;font-size:14px;line-height:14px;font-weight:400;color:#000;transform:scaleX(0.95);transform-origin:0 0">no</div>
<div class="t" style="left:755px;top:183.65px;font-size:14px;line-height:14px;font-weight:400;color:#000;transform:scaleX(0.95);transform-origin:0 0">no</div>
<div class="a" style="left:26px;top:201px;width:736px;height:19px;background:#c0e5f6"></div>
<div class="a" style="left:26px;top:220px;width:736px;height:1px;background:#4aa9e0"></div>
<svg class="a" style="left:30px;top:202px" width="18" height="18" viewBox="0 0 18 18"><circle cx="9" cy="9" r="7.5" fill="#62a187" stroke="#3b765c" stroke-width="1"/></svg>
<div class="a" style="left:54px;top:201px;width:31px;height:19px;overflow:hidden"><div class="t" style="left:0;top:2.65px;font-size:14px;line-height:14px;color:#000;transform:scaleX(0.86);transform-origin:0 0">01969</div></div>
<div class="t" style="left:88px;top:203.65px;font-size:14px;line-height:14px;color:#000;transform:scaleX(0.877);transform-origin:0 0">SWDEMO10007.3</div>
<div class="a" style="left:478px;top:201px;width:116px;height:19px;overflow:hidden"><div class="t" style="left:1px;top:2.65px;font-size:14px;line-height:14px;color:#000;">Lorem ipsum dolor sit</div></div>
<div class="t" style="left:597px;top:203.65px;font-size:14px;line-height:14px;font-weight:400;color:#000;transform:scaleX(0.95);transform-origin:0 0">no</div>
<div class="t" style="left:755px;top:203.65px;font-size:14px;line-height:14px;font-weight:400;color:#000;transform:scaleX(0.95);transform-origin:0 0">no</div>
<div class="a" style="left:26px;top:221px;width:736px;height:19px;background:#ffffff"></div>
<div class="a" style="left:26px;top:240px;width:736px;height:1px;background:#4aa9e0"></div>
<div class="a" style="left:52px;top:221px;width:1px;height:19px;background:#dcdcdc"></div>
<div class="a" style="left:85px;top:221px;width:1px;height:19px;background:#dcdcdc"></div>
<div class="a" style="left:356px;top:221px;width:1px;height:19px;background:#dcdcdc"></div>
<div class="a" style="left:476px;top:221px;width:1px;height:19px;background:#dcdcdc"></div>
<div class="a" style="left:594px;top:221px;width:1px;height:19px;background:#dcdcdc"></div>
<div class="a" style="left:752px;top:221px;width:1px;height:19px;background:#dcdcdc"></div>
<svg class="a" style="left:30px;top:222px" width="18" height="18" viewBox="0 0 18 18"><circle cx="9" cy="9" r="7.5" fill="#62a187" stroke="#3b765c" stroke-width="1"/></svg>
<div class="a" style="left:54px;top:221px;width:31px;height:19px;overflow:hidden"><div class="t" style="left:0;top:2.65px;font-size:14px;line-height:14px;color:#000;transform:scaleX(0.86);transform-origin:0 0">01969</div></div>
<div class="t" style="left:88px;top:223.65px;font-size:14px;line-height:14px;color:#000;transform:scaleX(0.877);transform-origin:0 0">SWDEMO10007.4</div>
<div class="a" style="left:478px;top:221px;width:116px;height:19px;overflow:hidden"><div class="t" style="left:1px;top:2.65px;font-size:14px;line-height:14px;color:#000;">Lorem ipsum dolor sit</div></div>
<div class="t" style="left:597px;top:223.65px;font-size:14px;line-height:14px;font-weight:400;color:#000;transform:scaleX(0.95);transform-origin:0 0">no</div>
<div class="t" style="left:755px;top:223.65px;font-size:14px;line-height:14px;font-weight:400;color:#000;transform:scaleX(0.95);transform-origin:0 0">no</div>
<div class="a" style="left:26px;top:241px;width:736px;height:19px;background:#c0e5f6"></div>
<div class="a" style="left:26px;top:260px;width:736px;height:1px;background:#4aa9e0"></div>
<svg class="a" style="left:30px;top:242px" width="18" height="18" viewBox="0 0 18 18"><circle cx="9" cy="9" r="7.5" fill="#62a187" stroke="#3b765c" stroke-width="1"/></svg>
<div class="a" style="left:54px;top:241px;width:31px;height:19px;overflow:hidden"><div class="t" style="left:0;top:2.65px;font-size:14px;line-height:14px;color:#000;transform:scaleX(0.86);transform-origin:0 0">01979</div></div>
<div class="t" style="left:88px;top:243.65px;font-size:14px;line-height:14px;color:#000;transform:scaleX(0.877);transform-origin:0 0">SWDEMO10001.1</div>
<div class="a" style="left:478px;top:241px;width:116px;height:19px;overflow:hidden"><div class="t" style="left:1px;top:2.65px;font-size:14px;line-height:14px;color:#000;">Lorem ipsum dolor sit</div></div>
<div class="t" style="left:597px;top:243.65px;font-size:14px;line-height:14px;font-weight:400;color:#000;transform:scaleX(0.95);transform-origin:0 0">no</div>
<div class="t" style="left:755px;top:243.65px;font-size:14px;line-height:14px;font-weight:400;color:#000;transform:scaleX(0.95);transform-origin:0 0">no</div>
<div class="a" style="left:26px;top:261px;width:736px;height:19px;background:#ffffff"></div>
<div class="a" style="left:26px;top:280px;width:736px;height:1px;background:#4aa9e0"></div>
<div class="a" style="left:52px;top:261px;width:1px;height:19px;background:#dcdcdc"></div>
<div class="a" style="left:85px;top:261px;width:1px;height:19px;background:#dcdcdc"></div>
<div class="a" style="left:356px;top:261px;width:1px;height:19px;background:#dcdcdc"></div>
<div class="a" style="left:476px;top:261px;width:1px;height:19px;background:#dcdcdc"></div>
<div class="a" style="left:594px;top:261px;width:1px;height:19px;background:#dcdcdc"></div>
<div class="a" style="left:752px;top:261px;width:1px;height:19px;background:#dcdcdc"></div>
<svg class="a" style="left:30px;top:262px" width="18" height="18" viewBox="0 0 18 18"><circle cx="9" cy="9" r="7.5" fill="#62a187" stroke="#3b765c" stroke-width="1"/></svg>
<div class="a" style="left:54px;top:261px;width:31px;height:19px;overflow:hidden"><div class="t" style="left:0;top:2.65px;font-size:14px;line-height:14px;color:#000;transform:scaleX(0.86);transform-origin:0 0">01979</div></div>
<div class="t" style="left:88px;top:263.65px;font-size:14px;line-height:14px;color:#000;transform:scaleX(0.877);transform-origin:0 0">SWDEMO10001.2</div>
<div class="a" style="left:478px;top:261px;width:116px;height:19px;overflow:hidden"><div class="t" style="left:1px;top:2.65px;font-size:14px;line-height:14px;color:#000;">Lorem ipsum dolor sit</div></div>
<div class="t" style="left:597px;top:263.65px;font-size:14px;line-height:14px;font-weight:400;color:#000;transform:scaleX(0.95);transform-origin:0 0">no</div>
<div class="t" style="left:755px;top:263.65px;font-size:14px;line-height:14px;font-weight:400;color:#000;transform:scaleX(0.95);transform-origin:0 0">no</div>
<div class="a" style="left:26px;top:281px;width:736px;height:19px;background:#c0e5f6"></div>
<div class="a" style="left:26px;top:300px;width:736px;height:1px;background:#4aa9e0"></div>
<svg class="a" style="left:30px;top:282px" width="18" height="18" viewBox="0 0 18 18"><circle cx="9" cy="9" r="7.5" fill="#62a187" stroke="#3b765c" stroke-width="1"/></svg>
<div class="a" style="left:54px;top:281px;width:31px;height:19px;overflow:hidden"><div class="t" style="left:0;top:2.65px;font-size:14px;line-height:14px;color:#000;transform:scaleX(0.86);transform-origin:0 0">01979</div></div>
<div class="t" style="left:88px;top:283.65px;font-size:14px;line-height:14px;color:#000;transform:scaleX(0.877);transform-origin:0 0">SWDEMO10001.4</div>
<div class="a" style="left:478px;top:281px;width:116px;height:19px;overflow:hidden"><div class="t" style="left:1px;top:2.65px;font-size:14px;line-height:14px;color:#000;">Lorem ipsum dolor sit</div></div>
<div class="t" style="left:597px;top:283.65px;font-size:14px;line-height:14px;font-weight:400;color:#000;transform:scaleX(0.95);transform-origin:0 0">no</div>
<div class="t" style="left:755px;top:283.65px;font-size:14px;line-height:14px;font-weight:400;color:#000;transform:scaleX(0.95);transform-origin:0 0">no</div>
<div class="a" style="left:26px;top:301px;width:736px;height:19px;background:#ffffff"></div>
<div class="a" style="left:26px;top:320px;width:736px;height:1px;background:#4aa9e0"></div>
<div class="a" style="left:52px;top:301px;width:1px;height:19px;background:#dcdcdc"></div>
<div class="a" style="left:85px;top:301px;width:1px;height:19px;background:#dcdcdc"></div>
<div class="a" style="left:356px;top:301px;width:1px;height:19px;background:#dcdcdc"></div>
<div class="a" style="left:476px;top:301px;width:1px;height:19px;background:#dcdcdc"></div>
<div class="a" style="left:594px;top:301px;width:1px;height:19px;background:#dcdcdc"></div>
<div class="a" style="left:752px;top:301px;width:1px;height:19px;background:#dcdcdc"></div>
<svg class="a" style="left:30px;top:302px" width="18" height="18" viewBox="0 0 18 18"><circle cx="9" cy="9" r="7.5" fill="#62a187" stroke="#3b765c" stroke-width="1"/></svg>
<div class="a" style="left:54px;top:301px;width:31px;height:19px;overflow:hidden"><div class="t" style="left:0;top:2.65px;font-size:14px;line-height:14px;color:#000;transform:scaleX(0.86);transform-origin:0 0">11dc9</div></div>
<div class="t" style="left:88px;top:303.65px;font-size:14px;line-height:14px;color:#000;transform:scaleX(0.877);transform-origin:0 0">SWDEMO10002</div>
<div class="a" style="left:478px;top:301px;width:116px;height:19px;overflow:hidden"><div class="t" style="left:1px;top:2.65px;font-size:14px;line-height:14px;color:#000;">Lorem ipsum dolor sit</div></div>
<div class="t" style="left:597px;top:303.65px;font-size:14px;line-height:14px;font-weight:400;color:#000;transform:scaleX(0.95);transform-origin:0 0">no</div>
<div class="t" style="left:755px;top:303.65px;font-size:14px;line-height:14px;font-weight:400;color:#000;transform:scaleX(0.95);transform-origin:0 0">no</div>
<div class="a" style="left:26px;top:321px;width:736px;height:19px;background:#c0e5f6"></div>
<div class="a" style="left:26px;top:340px;width:736px;height:1px;background:#4aa9e0"></div>
<svg class="a" style="left:30px;top:322px" width="18" height="18" viewBox="0 0 18 18"><circle cx="9" cy="9" r="7.5" fill="#62a187" stroke="#3b765c" stroke-width="1"/></svg>
<div class="a" style="left:54px;top:321px;width:31px;height:19px;overflow:hidden"><div class="t" style="left:0;top:2.65px;font-size:14px;line-height:14px;color:#000;transform:scaleX(0.86);transform-origin:0 0">18d39</div></div>
<div class="t" style="left:88px;top:323.65px;font-size:14px;line-height:14px;color:#000;transform:scaleX(0.877);transform-origin:0 0">SWDEMO10005.9</div>
<div class="a" style="left:478px;top:321px;width:116px;height:19px;overflow:hidden"><div class="t" style="left:1px;top:2.65px;font-size:14px;line-height:14px;color:#000;">Lorem ipsum dolor sit</div></div>
<div class="t" style="left:597px;top:323.65px;font-size:14px;line-height:14px;font-weight:400;color:#000;transform:scaleX(0.95);transform-origin:0 0">no</div>
<div class="t" style="left:755px;top:323.65px;font-size:14px;line-height:14px;font-weight:400;color:#000;transform:scaleX(0.95);transform-origin:0 0">no</div>
<div class="a" style="left:26px;top:341px;width:736px;height:19px;background:#ffffff"></div>
<div class="a" style="left:26px;top:360px;width:736px;height:1px;background:#4aa9e0"></div>
<div class="a" style="left:52px;top:341px;width:1px;height:19px;background:#dcdcdc"></div>
<div class="a" style="left:85px;top:341px;width:1px;height:19px;background:#dcdcdc"></div>
<div class="a" style="left:356px;top:341px;width:1px;height:19px;background:#dcdcdc"></div>
<div class="a" style="left:476px;top:341px;width:1px;height:19px;background:#dcdcdc"></div>
<div class="a" style="left:594px;top:341px;width:1px;height:19px;background:#dcdcdc"></div>
<div class="a" style="left:752px;top:341px;width:1px;height:19px;background:#dcdcdc"></div>
<svg class="a" style="left:30px;top:342px" width="18" height="18" viewBox="0 0 18 18"><circle cx="9" cy="9" r="7.5" fill="#62a187" stroke="#3b765c" stroke-width="1"/></svg>
<div class="a" style="left:54px;top:341px;width:31px;height:19px;overflow:hidden"><div class="t" style="left:0;top:2.65px;font-size:14px;line-height:14px;color:#000;transform:scaleX(0.86);transform-origin:0 0">19019</div></div>
<div class="t" style="left:88px;top:343.65px;font-size:14px;line-height:14px;color:#000;transform:scaleX(0.877);transform-origin:0 0">SWDEMO100013</div>
<div class="a" style="left:478px;top:341px;width:116px;height:19px;overflow:hidden"><div class="t" style="left:1px;top:2.65px;font-size:14px;line-height:14px;color:#000;">Lorem ipsum dolor sit</div></div>
<div class="t" style="left:597px;top:343.65px;font-size:14px;line-height:14px;font-weight:400;color:#000;transform:scaleX(0.95);transform-origin:0 0">no</div>
<div class="t" style="left:755px;top:343.65px;font-size:14px;line-height:14px;font-weight:400;color:#000;transform:scaleX(0.95);transform-origin:0 0">no</div>
<div class="a" style="left:26px;top:361px;width:736px;height:19px;background:#c0e5f6"></div>
<div class="a" style="left:26px;top:380px;width:736px;height:1px;background:#4aa9e0"></div>
<svg class="a" style="left:30px;top:362px" width="18" height="18" viewBox="0 0 18 18"><circle cx="9" cy="9" r="7.5" fill="#62a187" stroke="#3b765c" stroke-width="1"/></svg>
<div class="a" style="left:54px;top:361px;width:31px;height:19px;overflow:hidden"><div class="t" style="left:0;top:2.65px;font-size:14px;line-height:14px;color:#000;transform:scaleX(0.86);transform-origin:0 0">2a889</div></div>
<div class="t" style="left:88px;top:363.65px;font-size:14px;line-height:14px;color:#000;transform:scaleX(0.877);transform-origin:0 0">SWDEMO10001</div>
<div class="a" style="left:478px;top:361px;width:116px;height:19px;overflow:hidden"><div class="t" style="left:1px;top:2.65px;font-size:14px;line-height:14px;color:#000;">Lorem ipsum dolor sit</div></div>
<div class="t" style="left:597px;top:363.65px;font-size:14px;line-height:14px;font-weight:400;color:#000;transform:scaleX(0.95);transform-origin:0 0">no</div>
<div class="t" style="left:755px;top:363.65px;font-size:14px;line-height:14px;font-weight:400;color:#000;transform:scaleX(0.95);transform-origin:0 0">no</div>
<div class="a" style="left:26px;top:381px;width:736px;height:19px;background:#ffffff"></div>
<div class="a" style="left:26px;top:400px;width:736px;height:1px;background:#4aa9e0"></div>
<div class="a" style="left:52px;top:381px;width:1px;height:19px;background:#dcdcdc"></div>
<div class="a" style="left:85px;top:381px;width:1px;height:19px;background:#dcdcdc"></div>
<div class="a" style="left:356px;top:381px;width:1px;height:19px;background:#dcdcdc"></div>
<div class="a" style="left:476px;top:381px;width:1px;height:19px;background:#dcdcdc"></div>
<div class="a" style="left:594px;top:381px;width:1px;height:19px;background:#dcdcdc"></div>
<div class="a" style="left:752px;top:381px;width:1px;height:19px;background:#dcdcdc"></div>
<svg class="a" style="left:30px;top:382px" width="18" height="18" viewBox="0 0 18 18"><circle cx="9" cy="9" r="7.5" fill="#62a187" stroke="#3b765c" stroke-width="1"/></svg>
<div class="a" style="left:54px;top:381px;width:31px;height:19px;overflow:hidden"><div class="t" style="left:0;top:2.65px;font-size:14px;line-height:14px;color:#000;transform:scaleX(0.86);transform-origin:0 0">31449</div></div>
<div class="t" style="left:88px;top:383.65px;font-size:14px;line-height:14px;color:#000;transform:scaleX(0.877);transform-origin:0 0">SWDEMO10005.8</div>
<div class="a" style="left:478px;top:381px;width:116px;height:19px;overflow:hidden"><div class="t" style="left:1px;top:2.65px;font-size:14px;line-height:14px;color:#000;">Lorem ipsum dolor sit</div></div>
<div class="t" style="left:597px;top:383.65px;font-size:14px;line-height:14px;font-weight:400;color:#000;transform:scaleX(0.95);transform-origin:0 0">no</div>
<div class="t" style="left:755px;top:383.65px;font-size:14px;line-height:14px;font-weight:400;color:#000;transform:scaleX(0.95);transform-origin:0 0">no</div>
<div class="a" style="left:26px;top:401px;width:736px;height:19px;background:#c0e5f6"></div>
<div class="a" style="left:26px;top:420px;width:736px;height:1px;background:#4aa9e0"></div>
<svg class="a" style="left:30px;top:402px" width="18" height="18" viewBox="0 0 18 18"><circle cx="9" cy="9" r="7.5" fill="#62a187" stroke="#3b765c" stroke-width="1"/></svg>
<div class="a" style="left:54px;top:401px;width:31px;height:19px;overflow:hidden"><div class="t" style="left:0;top:2.65px;font-size:14px;line-height:14px;color:#000;transform:scaleX(0.86);transform-origin:0 0">3ac09</div></div>
<div class="t" style="left:88px;top:403.65px;font-size:14px;line-height:14px;color:#000;transform:scaleX(0.877);transform-origin:0 0">SWDEMO10006</div>
<div class="a" style="left:478px;top:401px;width:116px;height:19px;overflow:hidden"><div class="t" style="left:1px;top:2.65px;font-size:14px;line-height:14px;color:#000;">Lorem ipsum dolor sit</div></div>
<div class="t" style="left:597px;top:403.65px;font-size:14px;line-height:14px;font-weight:400;color:#000;transform:scaleX(0.95);transform-origin:0 0">no</div>
<div class="t" style="left:755px;top:403.65px;font-size:14px;line-height:14px;font-weight:400;color:#000;transform:scaleX(0.95);transform-origin:0 0">no</div>
<div class="a" style="left:26px;top:421px;width:736px;height:19px;background:#ffffff"></div>
<div class="a" style="left:26px;top:440px;width:736px;height:1px;background:#4aa9e0"></div>
<div class="a" style="left:52px;top:421px;width:1px;height:19px;background:#dcdcdc"></div>
<div class="a" style="left:85px;top:421px;width:1px;height:19px;background:#dcdcdc"></div>
<div class="a" style="left:356px;top:421px;width:1px;height:19px;background:#dcdcdc"></div>
<div class="a" style="left:476px;top:421px;width:1px;height:19px;background:#dcdcdc"></div>
<div class="a" style="left:594px;top:421px;width:1px;height:19px;background:#dcdcdc"></div>
<div class="a" style="left:752px;top:421px;width:1px;height:19px;background:#dcdcdc"></div>
<svg class="a" style="left:30px;top:422px" width="18" height="18" viewBox="0 0 18 18"><circle cx="9" cy="9" r="7.5" fill="#62a187" stroke="#3b765c" stroke-width="1"/></svg>
<div class="a" style="left:54px;top:421px;width:31px;height:19px;overflow:hidden"><div class="t" style="left:0;top:2.65px;font-size:14px;line-height:14px;color:#000;transform:scaleX(0.86);transform-origin:0 0">43a29</div></div>
<div class="t" style="left:88px;top:423.65px;font-size:14px;line-height:14px;color:#000;transform:scaleX(0.877);transform-origin:0 0">SWDEMO10005</div>
<div class="a" style="left:478px;top:421px;width:116px;height:19px;overflow:hidden"><div class="t" style="left:1px;top:2.65px;font-size:14px;line-height:14px;color:#000;">Lorem ipsum dolor sit</div></div>
<div class="t" style="left:597px;top:423.65px;font-size:14px;line-height:14px;font-weight:400;color:#000;transform:scaleX(0.95);transform-origin:0 0">no</div>
<div class="t" style="left:755px;top:423.65px;font-size:14px;line-height:14px;font-weight:400;color:#000;transform:scaleX(0.95);transform-origin:0 0">no</div>
<div class="a" style="left:26px;top:441px;width:736px;height:19px;background:#c0e5f6"></div>
<div class="a" style="left:26px;top:460px;width:736px;height:1px;background:#4aa9e0"></div>
<svg class="a" style="left:30px;top:442px" width="18" height="18" viewBox="0 0 18 18"><circle cx="9" cy="9" r="7.5" fill="#62a187" stroke="#3b765c" stroke-width="1"/></svg>
<div class="a" style="left:54px;top:441px;width:31px;height:19px;overflow:hidden"><div class="t" style="left:0;top:2.65px;font-size:14px;line-height:14px;color:#000;transform:scaleX(0.86);transform-origin:0 0">c75b9</div></div>
<div class="t" style="left:88px;top:443.65px;font-size:14px;line-height:14px;color:#000;transform:scaleX(0.877);transform-origin:0 0">SWDEMO10005.7</div>
<div class="a" style="left:478px;top:441px;width:116px;height:19px;overflow:hidden"><div class="t" style="left:1px;top:2.65px;font-size:14px;line-height:14px;color:#000;">Lorem ipsum dolor sit</div></div>
<div class="t" style="left:597px;top:443.65px;font-size:14px;line-height:14px;font-weight:400;color:#000;transform:scaleX(0.95);transform-origin:0 0">no</div>
<div class="t" style="left:755px;top:443.65px;font-size:14px;line-height:14px;font-weight:400;color:#000;transform:scaleX(0.95);transform-origin:0 0">no</div>
<div class="a" style="left:26px;top:461px;width:736px;height:19px;background:#ffffff"></div>
<div class="a" style="left:26px;top:480px;width:736px;height:1px;background:#4aa9e0"></div>
<div class="a" style="left:52px;top:461px;width:1px;height:19px;background:#dcdcdc"></div>
<div class="a" style="left:85px;top:461px;width:1px;height:19px;background:#dcdcdc"></div>
<div class="a" style="left:356px;top:461px;width:1px;height:19px;background:#dcdcdc"></div>
<div class="a" style="left:476px;top:461px;width:1px;height:19px;background:#dcdcdc"></div>
<div class="a" style="left:594px;top:461px;width:1px;height:19px;background:#dcdcdc"></div>
<div class="a" style="left:752px;top:461px;width:1px;height:19px;background:#dcdcdc"></div>
<svg class="a" style="left:30px;top:462px" width="18" height="18" viewBox="0 0 18 18"><circle cx="9" cy="9" r="7.5" fill="#62a187" stroke="#3b765c" stroke-width="1"/></svg>
<div class="a" style="left:54px;top:461px;width:31px;height:19px;overflow:hidden"><div class="t" style="left:0;top:2.65px;font-size:14px;line-height:14px;color:#000;transform:scaleX(0.86);transform-origin:0 0">c7bc9</div></div>
<div class="t" style="left:88px;top:463.65px;font-size:14px;line-height:14px;color:#000;transform:scaleX(0.877);transform-origin:0 0">SWDEMO10007</div>
<div class="a" style="left:478px;top:461px;width:116px;height:19px;overflow:hidden"><div class="t" style="left:1px;top:2.65px;font-size:14px;line-height:14px;color:#000;">Lorem ipsum dolor sit</div></div>
<div class="t" style="left:597px;top:463.65px;font-size:14px;line-height:14px;font-weight:400;color:#000;transform:scaleX(0.95);transform-origin:0 0">no</div>
<div class="t" style="left:755px;top:463.65px;font-size:14px;line-height:14px;font-weight:400;color:#000;transform:scaleX(0.95);transform-origin:0 0">no</div>
<div class="a" style="left:26px;top:481px;width:736px;height:19px;background:#c0e5f6"></div>
<div class="a" style="left:26px;top:500px;width:736px;height:1px;background:#4aa9e0"></div>
<svg class="a" style="left:30px;top:482px" width="18" height="18" viewBox="0 0 18 18"><circle cx="9" cy="9" r="7.5" fill="#62a187" stroke="#3b765c" stroke-width="1"/></svg>
<div class="a" style="left:54px;top:481px;width:31px;height:19px;overflow:hidden"><div class="t" style="left:0;top:2.65px;font-size:14px;line-height:14px;color:#000;transform:scaleX(0.86);transform-origin:0 0">e5939</div></div>
<div class="t" style="left:88px;top:483.65px;font-size:14px;line-height:14px;color:#000;transform:scaleX(0.877);transform-origin:0 0">SWDEMO10008</div>
<div class="t" style="left:597px;top:483.65px;font-size:14px;line-height:14px;font-weight:400;color:#000;transform:scaleX(0.95);transform-origin:0 0">no</div>
<div class="t" style="left:755px;top:483.65px;font-size:14px;line-height:14px;font-weight:400;color:#000;transform:scaleX(0.95);transform-origin:0 0">no</div>
<div class="a" style="left:213px;top:0px;width:1px;height:627px;background:#8a8a8a"></div>
<div class="a" style="left:475px;top:39px;width:121px;height:22px;border:2px solid #107c41"></div>
<div class="a" style="left:593px;top:58px;width:5px;height:5px;background:#107c41;border:1px solid #fff"></div>
</div>
<div class="a" style="left:24px;top:256px;width:30px;height:25px;border:4px solid #e8201f;border-radius:6px"></div>
<div class="a" style="left:765px;top:218px;width:16px;height:627px;background:#f7f7f7;border-radius:8px"></div>
<svg class="a" style="left:769px;top:224px;" width="9" height="7" viewBox="0 0 9 7"><path d="M0 7 L4.5 0.5 L9 7 Z" fill="#7a7a7a"/></svg>
<div class="a" style="left:769px;top:236px;width:9px;height:580px;background:#767676;border-radius:5px"></div>
<svg class="a" style="left:769px;top:835px;" width="9" height="7" viewBox="0 0 9 7"><path d="M0 0 H9 L4.5 6.5 Z" fill="#7a7a7a"/></svg>
<div class="a" style="left:0px;top:845px;width:785px;height:32px;background:#f0f0f0"></div>
<div class="a" style="left:0px;top:845px;width:762px;height:1px;background:#dedede"></div>
<svg class="a" style="left:28px;top:856px;" width="8" height="10" viewBox="0 0 8 10"><path d="M7 0.5 L1.5 5 L7 9.5" fill="none" stroke="#8a8a8a" stroke-width="1.1"/></svg>
<svg class="a" style="left:61px;top:856px;" width="8" height="10" viewBox="0 0 8 10"><path d="M1 0.5 L6.5 5 L1 9.5" fill="none" stroke="#8a8a8a" stroke-width="1.1"/></svg>
<div class="t " style="left:123px;top:855.00px;font-size:13px;line-height:13px;font-weight:400;color:#262626;">Sheet1</div>
<div class="a" style="left:177px;top:852px;width:1px;height:17px;background:#c8c8c8"></div>
<div class="a" style="left:182px;top:844px;width:73px;height:30px;background:#fff;border:1px solid #dedede;border-top:none;border-radius:0 0 5px 5px"></div>
<div class="t " style="left:190px;top:852.00px;font-size:13.2px;line-height:13.2px;font-weight:700;color:#1f1f1f;">Produkte</div>
<div class="a" style="left:190px;top:868px;width:58px;height:2px;background:#107c41"></div>
<div class="a" style="left:260px;top:852px;width:1px;height:17px;background:#c8c8c8"></div>
<svg class="a" style="left:303px;top:854px;" width="13" height="13" viewBox="0 0 13 13"><path d="M6.5 0 V13 M0 6.5 H13" stroke="#333" stroke-width="1.1"/></svg>
<div class="a" style="left:471px;top:856px;width:2px;height:2px;background:#333"></div>
<div class="a" style="left:471px;top:861px;width:2px;height:2px;background:#333"></div>
<div class="a" style="left:471px;top:866px;width:2px;height:2px;background:#333"></div>
<div class="a" style="left:489px;top:851px;width:274px;height:18px;background:#f7f7f7;border-radius:9px"></div>
<svg class="a" style="left:494px;top:856px;" width="7" height="9" viewBox="0 0 7 9"><path d="M7 0 V9 L0.5 4.5 Z" fill="#7a7a7a"/></svg>
<svg class="a" style="left:751px;top:856px;" width="7" height="9" viewBox="0 0 7 9"><path d="M0 0 V9 L6.5 4.5 Z" fill="#7a7a7a"/></svg>
<div class="a" style="left:572px;top:856px;width:28px;height:9px;background:#767676;border-radius:5px"></div>
<div class="a" style="left:0px;top:877px;width:1600px;height:21px;background:#f5f5f5"></div>
<div class="a" style="left:0px;top:877px;width:1600px;height:1px;background:#fff"></div>
<div class="a" style="left:0px;top:898px;width:1600px;height:2px;background:#2e2e2e"></div>
<div class="a" style="left:48px;top:898px;width:287px;height:2px;background:#dcdcdc"></div>
<div class="a" style="left:584px;top:898px;width:49px;height:2px;background:#5a5a5a"></div>
<div class="t " style="left:12px;top:883.00px;font-size:10.8px;line-height:10.8px;font-weight:400;color:#404040;">Ready</div>
<svg class="a" style="left:62px;top:880px;" width="15" height="15" viewBox="0 0 15 15"><circle cx="6" cy="2.5" r="1.8" fill="none" stroke="#333" stroke-width="1"/><path d="M1 5.5 L6 6.5 L11 5.5 M6 6.5 V9 L3 14 M6 9 L8 12" fill="none" stroke="#333" stroke-width="1"/><path d="M9 10 L14 15 M14 10 L9 15" stroke="#333" stroke-width="1"/></svg>
<div class="t " style="left:80px;top:883.00px;font-size:10.6px;line-height:10.6px;font-weight:700;color:#262626;">Accessibility: Investigate</div>
<div class="a" style="left:1297px;top:877px;width:40px;height:20px;background:#e0e0e0"></div>
<svg class="a" style="left:1310px;top:880px;" width="13" height="13" viewBox="0 0 13 13"><path d="M0.5 0.5 H12.5 V12.5 H0.5 Z M4.5 0.5 V12.5 M8.5 0.5 V12.5 M0.5 4.5 H12.5 M0.5 8.5 H12.5" fill="none" stroke="#333" stroke-width="1"/></svg>
<svg class="a" style="left:1350px;top:880px;" width="13" height="13" viewBox="0 0 13 13"><rect x="0.5" y="0.5" width="12" height="12" fill="none" stroke="#333"/><rect x="3" y="3" width="7" height="7" fill="none" stroke="#333" stroke-width="0.9"/><path d="M4.5 5 H8.5 M4.5 6.5 H8.5 M4.5 8 H8.5" stroke="#333" stroke-width="0.7"/></svg>
<svg class="a" style="left:1390px;top:880px;" width="13" height="13" viewBox="0 0 13 13"><path d="M0.5 0.5 H12.5 V12.5 H0.5 Z M0.5 7.5 H7.5 V0.5 M3.5 0.5 V7.5" fill="none" stroke="#333" stroke-width="1"/></svg>
<div class="a" style="left:1423px;top:887px;width:8px;height:1px;background:#333"></div>
<div class="a" style="left:1436px;top:887px;width:100px;height:1px;background:#777"></div>
<div class="a" style="left:1484px;top:882px;width:5px;height:11px;background:#666"></div>
<svg class="a" style="left:1541px;top:883px;" width="8" height="9" viewBox="0 0 8 9"><path d="M4 0 V9 M0 4.5 H8" stroke="#333" stroke-width="1"/></svg>
<div class="t " style="left:1563px;top:884.00px;font-size:10.4px;line-height:10.4px;font-weight:400;color:#404040;">100 %</div>
<div class="a" style="left:784px;top:221px;width:1px;height:654px;background:#d8d8d8"></div>
<div class="t " style="left:798px;top:235.00px;font-size:15px;line-height:15px;font-weight:400;color:#1f1f1f;">cobby</div>
<svg class="a" style="left:1537px;top:238px;" width="13" height="8" viewBox="0 0 13 8"><path d="M0.7 0.8 L6.5 6.8 L12.3 0.8" fill="none" stroke="#333" stroke-width="1.1"/></svg>
<svg class="a" style="left:1571px;top:237px;" width="10" height="10" viewBox="0 0 10 10"><path d="M0.5 0.5 L9.5 9.5 M9.5 0.5 L0.5 9.5" stroke="#333" stroke-width="1.1"/></svg>
<div class="a" style="left:798px;top:261px;width:788px;height:602px;background:#fff;border:1px solid #d6d6d6"></div>
<div class="a" style="left:799px;top:262px;width:786px;height:48px;background:#005eb2"></div>
<svg class="a" style="left:820px;top:273px;" width="25" height="26" viewBox="0 0 25 26">
<path d="M12 3.3 A9.7 9.7 0 1 0 21.7 13" fill="none" stroke="#fff" stroke-width="5.4"/>
<path d="M12.3 12.7 L20.5 4.5" stroke="#2aa4df" stroke-width="4" stroke-linecap="round"/>
<path d="M15 0.3 H24.7 V10 Z" fill="#2aa4df"/>
</svg>
<svg class="a" style="left:862px;top:276px;" width="20" height="20" viewBox="0 0 20 20"><path d="M10 0.5 V13 M4.5 8 L10 13.5 L15.5 8" fill="none" stroke="#fff" stroke-width="2"/><path d="M1.5 13 V17 Q1.5 18.5 3 18.5 H17 Q18.5 18.5 18.5 17 V13" fill="none" stroke="#fff" stroke-width="2" stroke-linecap="round"/></svg>
<svg class="a" style="left:902px;top:276px;" width="20" height="20" viewBox="0 0 20 20"><path d="M10 14 V1.5 M4.5 6.5 L10 1 L15.5 6.5" fill="none" stroke="#fff" stroke-width="2"/><path d="M1.5 13 V17 Q1.5 18.5 3 18.5 H17 Q18.5 18.5 18.5 17 V13" fill="none" stroke="#fff" stroke-width="2" stroke-linecap="round"/></svg>
<div class="a" style="left:893px;top:262px;width:39px;height:48px;border:4px solid #e8201f;border-radius:6px"></div>
<div class="a" style="left:949.5px;top:276px;width:5px;height:5px;border-radius:50%;background:#fff"></div>
<div class="a" style="left:949.5px;top:284.5px;width:5px;height:5px;border-radius:50%;background:#fff"></div>
<div class="a" style="left:949.5px;top:293px;width:5px;height:5px;border-radius:50%;background:#fff"></div>
<svg class="a" style="left:1541px;top:275px;" width="24" height="22" viewBox="0 0 24 22"><path d="M7 1 H3 Q1 1 1 3 V19 Q1 21 3 21 H7" fill="none" stroke="#fff" stroke-width="2"/><path d="M8 11 H20.5 M15.5 6 L20.5 11 L15.5 16" fill="none" stroke="#fff" stroke-width="2"/></svg>
<div class="a" style="left:893px;top:219px;width:37px;height:37px;border-radius:50%;background:#ef3a3d;box-shadow:0 2px 2px rgba(0,0,0,0.25)"></div>
<div class="t " style="left:904px;top:227.00px;font-size:23px;line-height:23px;font-weight:700;color:#fff;">1</div>
<div class="a" style="left:799px;top:310px;width:786px;height:31px;background:#e4e7eb"></div>
<div class="t " style="left:816px;top:319.00px;font-size:12.2px;line-height:12.2px;font-weight:400;color:#222;">Startseite</div>
<div class="t " style="left:888px;top:319.00px;font-size:12.2px;line-height:12.2px;font-weight:400;color:#1fa9e6;">Editor</div>
<div class="a" style="left:879px;top:337px;width:49px;height:3px;background:#1fb0ea"></div>
<div class="t " style="left:940px;top:319.00px;font-size:12.2px;line-height:12.2px;font-weight:400;color:#222;">Jobs</div>
<div class="a" style="left:808px;top:341px;width:767px;height:26px;background:#f3f3f3"></div>
<div class="a" style="left:810px;top:344px;width:15px;height:15px;background:#d6e5dc"></div>
<div class="a" style="left:825px;top:344px;width:15px;height:15px;background:#d3e4d9"></div>
<div class="a" style="left:840px;top:344px;width:15px;height:15px;background:#cde0d4"></div>
<div class="a" style="left:855px;top:344px;width:15px;height:15px;background:#d3e3d9"></div>
<div class="a" style="left:870px;top:344px;width:15px;height:15px;background:#cfe1d5"></div>
<div class="a" style="left:885px;top:344px;width:12px;height:15px;background:#dce8e0"></div>
<div class="a" style="left:810px;top:359px;width:15px;height:8px;background:#e3ede7"></div>
<div class="a" style="left:825px;top:359px;width:15px;height:8px;background:#e8f0eb"></div>
<div class="a" style="left:1528px;top:343px;width:15px;height:15px;background:#a8dcbf"></div>
<div class="a" style="left:1543px;top:343px;width:15px;height:15px;background:#6ecb98"></div>
<div class="a" style="left:1558px;top:343px;width:13px;height:15px;background:#dff0e6"></div>
<div class="a" style="left:1528px;top:358px;width:15px;height:9px;background:#d3ecde"></div>
<div class="a" style="left:1543px;top:358px;width:15px;height:9px;background:#87d3a9"></div>
<div class="a" style="left:1558px;top:358px;width:13px;height:9px;background:#e6f3eb"></div>
<svg class="a" style="left:835px;top:384px;" width="19" height="23" viewBox="0 0 19 23"><path d="M1.5 3 Q1.5 1.5 3 1.5 H12 L17.5 7 V20 Q17.5 21.5 16 21.5 H3 Q1.5 21.5 1.5 20 Z" fill="none" stroke="#111" stroke-width="2"/><path d="M11.5 1.5 V7.5 H17.5" fill="none" stroke="#111" stroke-width="1.6"/><path d="M5.5 8.5 H9 M5.5 12.5 H13.5 M5.5 16.5 H13.5" stroke="#111" stroke-width="1.8"/></svg>
<div class="t " style="left:862px;top:387.00px;font-size:16.2px;line-height:16.2px;font-weight:400;color:#111;-webkit-text-stroke:0.4px #111">Description (HTML-Editor)</div>
<div class="a" style="left:833px;top:428px;width:719px;height:398px;background:#fff;border:1.5px solid #e3e3e3;border-radius:10px"></div>
<div class="a" style="left:846px;top:440px;width:130px;height:28px;background:#f5f5f5;border-radius:3px"></div>
<div class="t " style="left:854.5px;top:449.00px;font-size:13.3px;line-height:13.3px;font-weight:400;color:#222f3e;">Paragraph</div>
<svg class="a" style="left:959px;top:450px;" width="11" height="7" viewBox="0 0 11 7"><path d="M0.6 0.6 L5.5 5.6 L10.4 0.6" fill="none" stroke="#9aa0a8" stroke-width="1.3"/></svg>
<svg class="a" style="left:1013px;top:448px;" width="10" height="10" viewBox="0 0 10 10"><path d="M0.9 10 L4.2 0.9 H5.8 L9.1 10 M2.3 6.6 H7.7" fill="none" stroke="#222f3e" stroke-width="1.8"/></svg>
<div class="a" style="left:1009px;top:460px;width:18px;height:3px;background:#000"></div>
<svg class="a" style="left:1038px;top:451px;" width="11" height="6" viewBox="0 0 11 6"><path d="M0.6 0.6 L5.5 5.3 L10.4 0.6" fill="none" stroke="#9aa0a8" stroke-width="1.3"/></svg>
<div class="a" style="left:1052px;top:440px;width:34px;height:28px;background:#9ccff7;border-radius:4px"></div>
<svg class="a" style="left:1064px;top:447px;" width="12" height="14" viewBox="0 0 12 14"><path d="M1 1 H6.5 Q10.3 1 10.3 4.2 Q10.3 6.6 7.6 7 Q11 7.4 11 10.2 Q11 13 7.2 13 H1 Z M1 7 H7" fill="none" stroke="#222f3e" stroke-width="2.1" stroke-linejoin="round"/></svg>
<svg class="a" style="left:1099px;top:446px;" width="11" height="15" viewBox="0 0 11 15"><path d="M4.4 0.8 H10.4 M0.6 14.2 H6.6 M7.3 0.8 L3.7 14.2" fill="none" stroke="#222f3e" stroke-width="1.4"/></svg>
<svg class="a" style="left:1133px;top:447px;" width="12" height="15" viewBox="0 0 12 15"><path d="M1.5 0 V6.8 Q1.5 10.4 6 10.4 Q10.5 10.4 10.5 6.8 V0" fill="none" stroke="#222f3e" stroke-width="1.8"/><rect x="1" y="12.8" width="10" height="1.8" fill="#222f3e"/></svg>
<svg class="a" style="left:1190px;top:447px;" width="17" height="14" viewBox="0 0 17 14"><path d="M13.5 2.6 Q12.3 0.9 9 0.9 Q4.8 0.9 4.8 4 Q4.8 6 8 7 M9.5 7.5 Q13.6 8.6 13.6 10.4 Q13.6 13 9.2 13 Q5.5 13 4.3 11.2" fill="none" stroke="#222f3e" stroke-width="1.8"/><rect x="0" y="7" width="16.5" height="1.6" fill="#222f3e"/></svg>
<svg class="a" style="left:1223px;top:446px;" width="20" height="16" viewBox="0 0 20 16"><path d="M1.3 4.8 L11.8 15.3 M11.8 4.8 L1.3 15.3" stroke="#222f3e" stroke-width="1.9"/><path d="M13.6 1.9 Q14.3 0.5 16 0.5 Q18 0.5 18 2.2 Q18 3.6 16 5 L13.8 6.8 H18.6" fill="none" stroke="#222f3e" stroke-width="1.3"/></svg>
<svg class="a" style="left:1258px;top:446px;" width="20" height="16" viewBox="0 0 20 16"><path d="M1.3 0.6 L11.8 11.1 M11.8 0.6 L1.3 11.1" stroke="#222f3e" stroke-width="1.9"/><path d="M13.6 11.4 Q14.3 10 16 10 Q18 10 18 11.7 Q18 13.1 16 14.5 L13.8 15.8 H18.6" fill="none" stroke="#222f3e" stroke-width="1.3"/></svg>
<svg class="a" style="left:1319px;top:447px;" width="16" height="14" viewBox="0 0 16 14"><rect x="0" y="0" width="16" height="2" fill="#222f3e"/><rect x="0" y="4" width="10" height="2" fill="#222f3e"/><rect x="0" y="8" width="16" height="2" fill="#222f3e"/><rect x="0" y="12" width="10" height="2" fill="#222f3e"/></svg>
<svg class="a" style="left:1354px;top:447px;" width="16" height="14" viewBox="0 0 16 14"><rect x="0" y="0" width="16" height="2" fill="#222f3e"/><rect x="6" y="4" width="10" height="2" fill="#222f3e"/><rect x="0" y="8" width="16" height="2" fill="#222f3e"/><rect x="6" y="12" width="10" height="2" fill="#222f3e"/></svg>
<svg class="a" style="left:1389px;top:447px;" width="16" height="14" viewBox="0 0 16 14"><rect x="0" y="0" width="16" height="2" fill="#222f3e"/><rect x="0" y="4" width="16" height="2" fill="#222f3e"/><rect x="0" y="8" width="16" height="2" fill="#222f3e"/><rect x="0" y="12" width="16" height="2" fill="#222f3e"/></svg>
<svg class="a" style="left:1424px;top:447px;" width="16" height="14" viewBox="0 0 16 14"><rect x="0" y="0" width="16" height="2" fill="#222f3e"/><rect x="3" y="4" width="10" height="2" fill="#222f3e"/><rect x="0" y="8" width="16" height="2" fill="#222f3e"/><rect x="3" y="12" width="10" height="2" fill="#222f3e"/></svg>
<svg class="a" style="left:1483px;top:451px;" width="17" height="6" viewBox="0 0 17 6"><circle cx="2.5" cy="3" r="2.3" fill="#222f3e"/><circle cx="8.5" cy="3" r="2.3" fill="#222f3e"/><circle cx="14.5" cy="3" r="2.3" fill="#222f3e"/></svg>
<div class="a" style="left:835px;top:478px;width:714px;height:6px;background:linear-gradient(rgba(0,0,0,0.07),rgba(0,0,0,0))"></div>
<div class="a" style="left:1536px;top:480px;width:14px;height:320px;background:#fafafa"></div>
<svg class="a" style="left:1538px;top:484px;" width="9" height="6" viewBox="0 0 9 6"><path d="M0 6 L4.5 0.5 L9 6 Z" fill="#8a8a8a"/></svg>
<div class="a" style="left:1538px;top:508px;width:9px;height:274px;background:#8c8c8c;border-radius:5px"></div>
<svg class="a" style="left:1538px;top:788px;" width="9" height="6" viewBox="0 0 9 6"><path d="M0 0 H9 L4.5 5.5 Z" fill="#8a8a8a"/></svg>
<svg class="a" style="left:852px;top:486px;" width="18" height="21" viewBox="0 0 18 21"><path d="M5 1.5 Q9 3 13 1.5 L16.5 4 Q17.5 5 17.5 7 V19 Q17.5 20.5 16 20.5 H2 Q0.5 20.5 0.5 19 V7 Q0.5 5 1.5 4 Z" fill="#2b2b2b" stroke="#111" stroke-width="1"/><path d="M9 3.5 V20" stroke="#555" stroke-width="0.8"/><path d="M5 1.5 L9 6 L13 1.5" fill="none" stroke="#666" stroke-width="0.8"/><rect x="9.8" y="9" width="2" height="1.4" fill="#888"/><rect x="9.8" y="12" width="2" height="1.4" fill="#888"/><rect x="9.8" y="15" width="2" height="1.4" fill="#888"/></svg>
<div class="t " style="left:877px;top:487.00px;font-size:19.7px;line-height:19.7px;font-weight:700;color:#000;text-decoration:underline;text-underline-offset:2px;text-decoration-thickness:1.5px;-webkit-text-stroke:0.4px #000">Womenʼs Premium All-Weather Jacket</div>
<div class="a" style="left:850px;top:532.29px;width:669px;font-size:15.6px;line-height:15.6px;color:#000;white-space:nowrap;text-align:justify;text-align-last:justify">Experience ultimate comfort and style with this versatile women's jacket, designed for the</div>
<div class="a" style="left:850px;top:554.69px;width:669px;font-size:15.6px;line-height:15.6px;color:#000;white-space:nowrap;text-align:justify;text-align-last:justify">modern professional. Crafted from high-quality, <b>water-resistant</b> material, it keeps you dry</div>
<div class="a" style="left:850px;top:577.09px;width:669px;font-size:15.6px;line-height:15.6px;color:#000;white-space:nowrap;text-align:justify;text-align-last:justify">during unexpected showers while maintaining breathability. The sleek design features a full-</div>
<div class="a" style="left:850px;top:599.49px;width:669px;font-size:15.6px;line-height:15.6px;color:#000;white-space:nowrap;text-align:justify;text-align-last:justify">length zipper, adjustable cuffs, and multiple interior pockets for secure storage of your</div>
<div class="a" style="left:850px;top:621.89px;width:669px;font-size:15.6px;line-height:15.6px;color:#000;white-space:nowrap;text-align:justify;text-align-last:justify">essentials. The <b>flattering fit</b> complements any outfit, whether you're heading to the office or</div>
<div class="a" style="left:850px;top:644.29px;width:669px;font-size:15.6px;line-height:15.6px;color:#000;white-space:nowrap;text-align:justify;text-align-last:justify">exploring the outdoors. The durable construction ensures long-lasting wear, making this jacket</div>
<div class="a" style="left:850px;top:666.69px;width:669px;font-size:15.6px;line-height:15.6px;color:#000;white-space:nowrap;text-align:left">an essential addition to your wardrobe for all seasons.</div>
<svg class="a" style="left:852px;top:703px;" width="19" height="19" viewBox="0 0 19 19"><path d="M11 1 Q12 7 18 9 Q12 11 11 17 Q10 11 4 9 Q10 7 11 1 Z" fill="#fde047" stroke="#111" stroke-width="1.1"/><path d="M4 1.5 Q4.5 4 7 4.5 Q4.5 5 4 7.5 Q3.5 5 1 4.5 Q3.5 4 4 1.5 Z" fill="#4fc3f7" stroke="#111" stroke-width="0.8"/><path d="M6 11.5 Q6.5 14 9 14.5 Q6.5 15 6 17.5 Q5.5 15 3 14.5 Q5.5 14 6 11.5 Z" fill="#f48fb1" stroke="#111" stroke-width="0.8"/></svg>
<div class="t " style="left:877px;top:703.00px;font-size:15px;line-height:15px;font-weight:700;color:#000;">Key Features:</div>
<div class="a" style="left:872px;top:748px;width:6px;height:6px;background:#000;border-radius:50%"></div>
<div class="a" style="left:872px;top:770px;width:6px;height:6px;background:#000;border-radius:50%"></div>
<div class="t " style="left:890px;top:742.00px;font-size:16px;line-height:16px;font-weight:400;color:#000;">high-quality, water-resistant material</div>
<div class="t " style="left:890px;top:764.00px;font-size:16px;line-height:16px;font-weight:400;color:#000;">full-length zipper</div>
<div class="a" style="left:834px;top:800px;width:716px;height:1px;background:#e3e3e3"></div>
<div class="t " style="left:842px;top:808.00px;font-size:13.8px;line-height:13.8px;font-weight:400;color:#6a737d;">p › strong</div>
<svg class="a" style="left:1492px;top:804px;" width="16" height="16" viewBox="0 0 16 16"><path d="M4 1.2 L11.5 0.2 Q15.2 -0.2 15.2 3.5 V11.5 Q15.2 14 12.5 14.4 L4.2 15.6 Q0.5 16 0.5 12.5 V4.5 Q0.5 1.7 4 1.2 Z" fill="#4b5a68"/><path d="M3.8 5.5 L12 4.2 V11.2 L3.8 12.5 Z" fill="#fff"/><path d="M6.2 6.8 L9.8 6.2 V9.6 L6.2 10.2 Z" fill="#4b5a68"/></svg>
<div class="t " style="left:1511px;top:803.00px;font-size:16.2px;line-height:16.2px;font-weight:700;color:#4b5a68;letter-spacing:-0.2px">tiny</div>
<div class="a" style="left:799px;top:826px;width:786px;height:36px;overflow:hidden"><div class="a" style="left:638px;top:13px;width:115px;height:40px;background:#005eb2;border-radius:6px"></div><div class="t" style="left:655px;top:24.66px;font-size:13.4px;line-height:13.4px;font-weight:700;color:#fff">&Uuml;bernehmen</div></div>
<div class="a" style="left:785px;top:862px;width:815px;height:15px;background:#f0f0f0"></div>
</body></html>
